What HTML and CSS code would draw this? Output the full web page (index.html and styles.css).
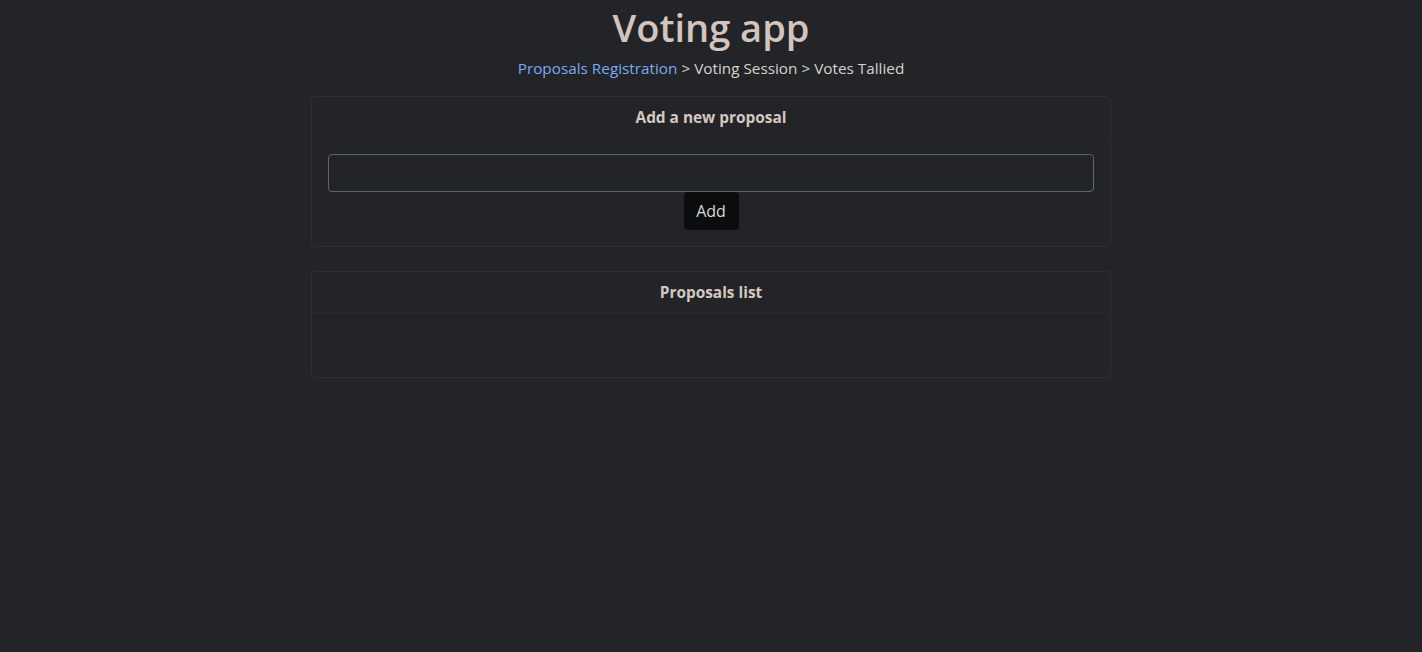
FILE: index.html
```html
<!DOCTYPE html>
<html>
<head>
<meta charset="utf-8">
<link rel="stylesheet" href="styles.css">
</head>
<body>
<div class="app">
  <h1 class="title">Voting app</h1>
  <div class="steps"><span class="step-active">Proposals Registration</span> &gt; <span>Voting Session</span> &gt; <span>Votes Tallied</span></div>
  <div class="card">
    <div class="card-header">Add a new proposal</div>
    <div class="card-body add-body">
      <input class="field" type="text">
      <button class="btn">Add</button>
    </div>
  </div>
  <div class="card list-card">
    <div class="card-header">Proposals list</div>
    <div class="card-body list-body"></div>
  </div>
</div>
</body>
</html>
```

FILE: styles.css
```css
html, body {
  margin: 0;
  padding: 0;
  background: #222427;
  height: 100%;
}
body {
  font-family: "Open Sans", "Noto Sans", sans-serif;
  color: #d8d3cd;
  font-size: 15px;
}
.app {
  display: flex;
  flex-direction: column;
  align-items: center;
}
.title {
  margin: 3px 0 0;
  font-size: 38px;
  font-weight: 600;
  color: #d3c5bd;
  line-height: 48px;
}
.steps {
  margin-top: 6px;
  line-height: 22px;
  color: #d8d3cd;
  font-size: 15.3px;
}
.step-active {
  color: #79aaf2;
}
.card {
  width: 798px;
  border: 1px solid #2d3032;
  border-radius: 4px;
  margin-top: 17px;
  background: #222427;
}
.list-card {
  margin-top: 24px;
}
.card-header {
  height: 40px;
  border-bottom: 1px solid #2c2926;
  display: flex;
  align-items: center;
  justify-content: center;
  font-weight: 700;
  font-size: 15.4px;
  color: #d4c8c0;
}
.card-body {
  padding: 16px;
}
.add-body {
  display: flex;
  flex-direction: column;
  align-items: center;
}
.field {
  box-sizing: border-box;
  width: 100%;
  height: 38px;
  background: #222427;
  border: 1px solid #5a6672;
  border-radius: 4px;
  color: #d8d3cd;
  font: inherit;
  outline: none;
}
.btn {
  margin-top: 0;
  height: 38px;
  width: 55px;
  background: #0b0c0d;
  color: #ddd8d2;
  border: none;
  border-radius: 4px;
  font-family: "Open Sans", "Noto Sans", sans-serif;
  font-size: 16px;
  padding: 0;
}
.list-body {
  height: 32px;
}
```
